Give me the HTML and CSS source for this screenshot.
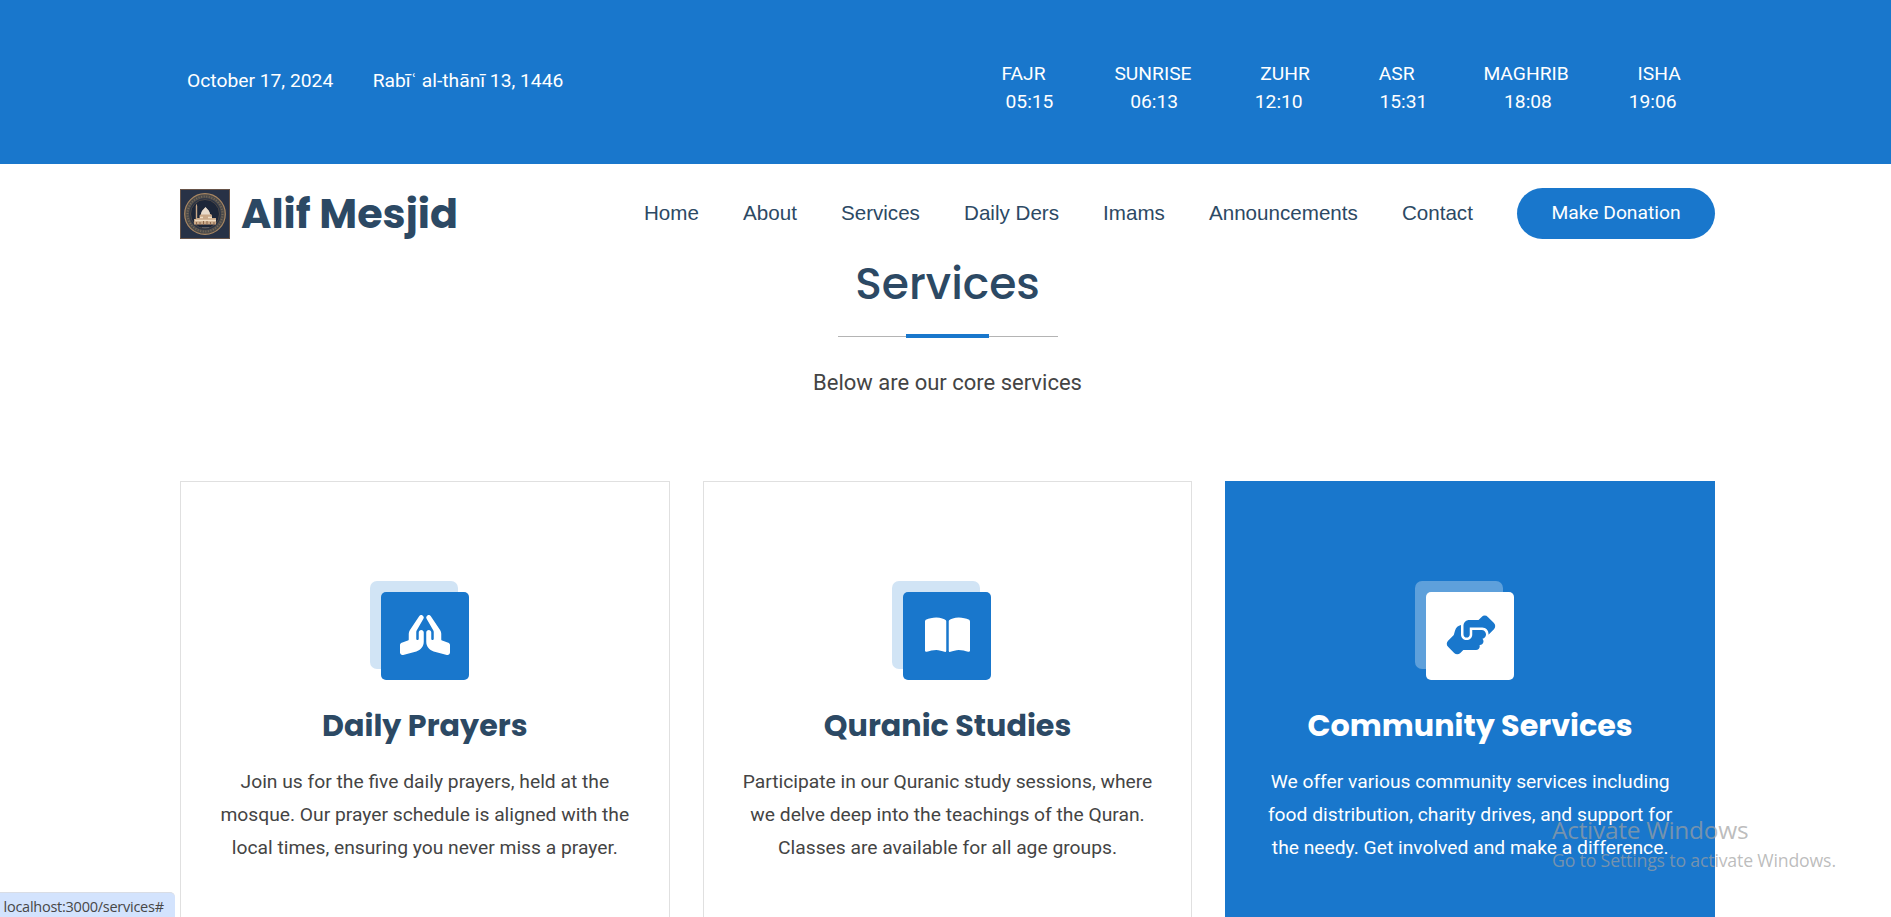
FILE: index.html
```html
<!DOCTYPE html>
<html lang="en">
<head>
<meta charset="utf-8">
<title>Alif Mesjid</title>
<link rel="stylesheet" href="styles.css">
</head>
<body>
<div class="topbar">
  <div class="container topbar-inner">
    <div class="dates"><span class="greg">October 17, 2024</span><span class="hijri">Rabīʿ al-thānī 13, 1446</span></div>
    <div class="prayers">
      <div class="names"><span>FAJR</span><span>SUNRISE</span><span>ZUHR</span><span>ASR</span><span>MAGHRIB</span><span>ISHA</span></div>
      <div class="times"><span>05:15</span><span>06:13</span><span>12:10</span><span>15:31</span><span>18:08</span><span>19:06</span></div>
    </div>
  </div>
</div>
<header class="container header">
  <a class="brand">
    <svg class="logo" viewBox="0 0 50 50">
      <rect width="50" height="50" fill="#675449"/>
      <rect x="1" y="1" width="48" height="48" fill="#283246"/>
      <circle cx="25" cy="25" r="18" fill="none" stroke="#4d4b4a" stroke-width="4.5"/>
      <circle cx="25" cy="25" r="17.5" fill="none" stroke="#756a5b" stroke-width="2" stroke-dasharray="1 1.6"/>
      <circle cx="25" cy="25" r="20.3" fill="none" stroke="#a98762" stroke-width="1.2"/>
      <circle cx="25" cy="25" r="14.5" fill="#1d2638" stroke="#5e5348" stroke-width=".7"/>
      <path d="M14 35.500v-5.500h1.800v-13l.7-2.500.7 2.500v12h2.300v-2.500c1-1.500 1.500-1.500 2.500-1.500 0-3 1.500-4 3.500-6.500 2.500 2.500 4 3.500 4 6.500 1.500 0 2 0 2.500 1.500v2.500h4v6.500z" fill="#c9a888"/>
      <path d="M21 25.500c0-3.500 2-4.500 4.500-7.500 2.500 3 4.500 4 4.500 7.500z" fill="#e9dccd"/>
      <path d="M20 28.500h3M28 28.500h4M15 31.500h21" stroke="#f1ddc4" stroke-width="1.300"/>
      <path d="M16.500 36v-3M20 36v-3M23.500 36v-4M27 36v-4M30.500 36v-3M34 36v-3" stroke="#8b674c"/>
      <path d="M22 38.500h7" stroke="#6e7078" stroke-width=".7"/>
    </svg>
    <span class="brand-name">Alif Mesjid</span>
  </a>
  <nav class="nav"><a>Home</a><a>About</a><a>Services</a><a>Daily Ders</a><a>Imams</a><a>Announcements</a><a>Contact</a></nav>
  <a class="donate">Make Donation</a>
</header>
<main class="container">
  <div class="section-title">
    <h2>Services</h2>
    <div class="rule"><span></span></div>
    <p>Below are our core services</p>
  </div>
  <div class="cards">
    <article class="card">
      <div class="icon"><svg width="50" height="40" viewBox="0 0 640 512"><path d="M351.2 4.800c3.200-2 6.600-3.300 10-4.100c4.700-1 9.600-.9 14.100 .1c7.700 1.800 14.800 6.500 19.400 13.600L514.600 194.200c8.800 13.100 13.400 28.600 13.400 44.400v73.500c0 6.900 4.400 13 10.900 15.200l79.200 26.400C631.200 358 640 370.200 640 384v96c0 9.900-4.600 19.300-12.500 25.400s-18.100 8.100-27.700 5.500L431 465.900c-56-14.900-95-65.700-95-123.700V224c0-17.700 14.300-32 32-32s32 14.300 32 32v80c0 8.800 7.200 16 16 16s16-7.200 16-16V219.100c0-7-1.800-13.800-5.300-19.800L340.300 48.100c-1.700-3-2.900-6.100-3.600-9.300c-1-4.700-1-9.600 .1-14.100c1.900-8 6.800-15.200 14.300-19.900zm-62.400 0c7.500 4.600 12.400 11.900 14.300 19.900c1.100 4.600 1.200 9.400 .1 14.100c-.7 3.200-1.900 6.300-3.600 9.300L213.300 199.300c-3.500 6-5.300 12.900-5.300 19.800V304c0 8.800 7.200 16 16 16s16-7.200 16-16V224c0-17.700 14.300-32 32-32s32 14.300 32 32V342.300c0 58-39 108.700-95 123.700l-168.700 45c-9.600 2.600-19.900 .5-27.700-5.500S0 490 0 480V384c0-13.800 8.800-26 21.900-30.400l79.200-26.400c6.500-2.200 10.900-8.300 10.900-15.200V238.500c0-15.800 4.600-31.200 13.400-44.400L245.200 14.500c4.600-7.100 11.700-11.800 19.400-13.600c4.600-1.100 9.400-1.200 14.100-.1c3.500 .8 6.900 2.100 10 4.100z"/></svg></div>
      <h4>Daily Prayers</h4>
      <p>Join us for the five daily prayers, held at the<br>mosque. Our prayer schedule is aligned with the<br>local times, ensuring you never miss a prayer.</p>
    </article>
    <article class="card">
      <div class="icon"><svg width="45" height="40" viewBox="0 0 576 512"><path d="M249.600 471.500c10.800 3.800 22.400-4.100 22.400-15.500V78.600c0-4.200-1.600-8.400-5-11C247.400 52 202.400 32 144 32C93.500 32 46.300 45.300 18.100 56.100C6.800 60.500 0 71.700 0 83.800V454.100c0 11.900 12.800 20.200 24.100 16.500C55.600 460.100 105.500 448 144 448c33.900 0 79 14 105.600 23.500zm76.800 0C353 462 398.100 448 432 448c38.500 0 88.400 12.100 119.900 22.600c11.300 3.800 24.100-4.600 24.100-16.500V83.800c0-12.100-6.800-23.300-18.100-27.600C529.700 45.300 482.500 32 432 32c-58.400 0-103.400 20-123 35.600c-3.300 2.600-5 6.800-5 11V456c0 11.400 11.700 19.300 22.400 15.500z"/></svg></div>
      <h4>Quranic Studies</h4>
      <p>Participate in our Quranic study sessions, where<br>we delve deep into the teachings of the Quran.<br>Classes are available for all age groups.</p>
    </article>
    <article class="card active">
      <div class="icon"><svg width="50" height="40" viewBox="0 0 640 512"><path d="M544 248v3.300l69.700-69.700c21.900-21.900 21.900-57.300 0-79.200L535.600 24.400c-21.900-21.900-57.300-21.900-79.200 0L416.300 64.500c-2.700-.3-5.500-.5-8.300-.5H296c-37.100 0-67.600 28-71.600 64H224V248c0 22.100 17.900 40 40 40s40-17.900 40-40V160H464c44.200 0 80 35.800 80 80v8zM336 192v56c0 39.800-32.200 72-72 72s-72-32.200-72-72V129.400c-35.900 6.200-65.800 32.300-76 68.200L99.500 255.200 26.300 328.400c-21.900 21.900-21.900 57.300 0 79.200l78.100 78.100c21.900 21.900 57.300 21.900 79.200 0l37.700-37.700c.9 0 1.800 .1 2.700 .1H384c26.500 0 48-21.500 48-48c0-5.600-1-11-2.700-16H432c26.500 0 48-21.500 48-48c0-12.800-5-24.400-13.200-33c25.700-5 45.100-27.600 45.200-54.800v-.4c-.1-30.800-25.100-55.800-56-55.800l-120 0z"/></svg></div>
      <h4>Community Services</h4>
      <p>We offer various community services including<br>food distribution, charity drives, and support for<br>the needy. Get involved and make a difference.</p>
    </article>
  </div>
</main>
<div class="watermark"><div class="wm-title">Activate Windows</div><div class="wm-text">Go to Settings to activate Windows.</div></div>
<div class="status">localhost:3000/services#</div>
</body>
</html>
```
FILE: styles.css
```css
* { box-sizing: border-box; }
html, body { height: 100%; }
body {
  margin: 0;
  overflow: hidden;
  background: #fff;
  color: #444;
  font-family: Roboto, "Liberation Sans", sans-serif;
  font-size: 19.250px;
}
h2, h4, p { margin: 0; }
.container { width: 1535px; margin: 0 auto 0 180px; }

.topbar { height: 164px; background: #1977cc; color: #fff; white-space: nowrap; }
.topbar-inner { display: flex; justify-content: space-between; line-height: 28px; }
.dates { display: flex; gap: 39.500px; padding: 67px 0 0 7px; }
.prayers { padding-top: 60px; width: 713.500px; }
.names { display: flex; gap: 68.800px; }
.times { display: flex; gap: 76.700px; padding-left: 4px; }

.header { display: flex; align-items: center; height: 99px; white-space: nowrap; }
.brand { display: flex; align-items: center; gap: 11px; width: 464px; }
.logo { width: 50px; height: 50px; }
.brand-name {
  color: #2c4964;
  font: 700 41.250px/50px Poppins, Inter, sans-serif;
}
.nav {
  display: flex;
  gap: 44.100px;
  width: 873px;
  padding-bottom: 2px;
  color: #2c4964;
  font: 20.600px/24px "Liberation Sans", Arial, sans-serif;
}
.donate {
  width: 198px;
  height: 51px;
  border-radius: 26px;
  background: #1977cc;
  color: #fff;
  line-height: 50px;
  text-align: center;
}

.section-title { height: 218px; padding-top: 1px; text-align: center; }
.section-title h2 {
  color: #2c4964;
  font: 500 44px/40px Poppins, Inter, sans-serif;
}
.rule { display: flex; justify-content: center; align-items: center; width: 220px; height: 4px; margin: 30px auto 0; background: linear-gradient(#b4b4b4, #b4b4b4) 0 2px / 100% 1px no-repeat; }
.rule span { width: 83px; height: 4px; background: #1977cc; }
.section-title p { margin-top: 28px; font-size: 22px; line-height: 33px; }

.cards { display: grid; grid-template-columns: repeat(3, 1fr); gap: 33px; }
.card {
  height: 480px;
  padding-top: 110px;
  border: 1px solid #e0e0e0;
  display: flex;
  flex-direction: column;
  align-items: center;
  text-align: center;
  white-space: nowrap;
}
.icon {
  display: flex;
  justify-content: center;
  align-items: center;
  width: 88px;
  height: 88px;
  padding-left: 1px;
  border-radius: 5px;
  background: #1977cc;
  position: relative;
}
.icon::before {
  content: "";
  position: absolute;
  z-index: -1;
  left: -11px;
  top: -11px;
  width: 88px;
  height: 88px;
  border-radius: 7px;
  background: #d1e4f5;
}
.icon svg { fill: #fff; margin-top: -2px; }
.card h4 { margin-top: 28px; color: #2c4964; font: 700 30.200px/36px Poppins, Inter, sans-serif; }
.card p { margin-top: 21px; line-height: 33px; }
.active { background: #1977cc; border-color: #1977cc; color: #fff; position: relative; z-index: 0; }
.active h4 { color: #fff; }
.active .icon { background: #fff; }
.active .icon::before { background: #5ea0db; }
.active .icon svg { fill: #1977cc; }

.watermark {
  position: absolute;
  left: 1552px;
  top: 811px;
  z-index: 2;
  color: rgba(160, 160, 160, .7);
  font-family: "Segoe UI", "Open Sans", sans-serif;
  white-space: nowrap;
}
.wm-title { font-size: 24.500px; line-height: 38px; letter-spacing: -.3px; }
.wm-text { font-size: 17.700px; line-height: 22px; letter-spacing: -.17px; }
.status {
  position: absolute;
  left: 0;
  bottom: 0;
  width: 175px;
  height: 25px;
  padding-left: 3.500px;
  border-top: 1px solid #d9dde5;
  border-top-right-radius: 5px;
  background: #d3e3fd;
  color: #474747;
  font: 14.500px/27px "Segoe UI", "Open Sans", sans-serif;
  letter-spacing: -.25px;
  white-space: nowrap;
}
```
